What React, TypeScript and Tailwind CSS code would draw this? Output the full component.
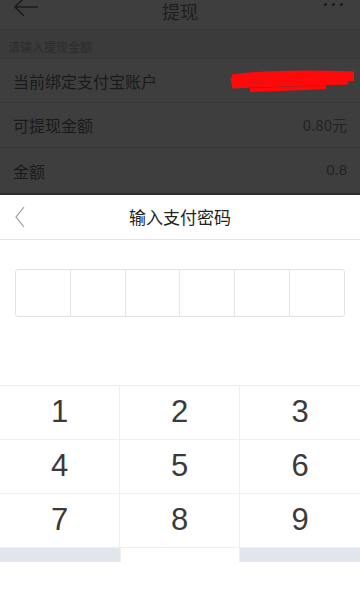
import React from "react";

const font = { fontFamily: '"Noto Sans CJK SC", "Noto Sans", sans-serif' };

export default function App() {
  const keys = ["1", "2", "3", "4", "5", "6", "7", "8", "9"];
  return (
    <div className="w-[360px] h-[602px] overflow-hidden bg-white flex flex-col" style={font}>
      {/* dimmed page */}
      <div className="h-[195px] bg-[#3e3e3e] flex flex-col shrink-0 border-b-2 border-[#2c2c2c]">
        <div className="h-[30px] flex items-center justify-between px-[13px] border-b border-[#353535] relative">
          <svg width="26" height="20" viewBox="0 0 26 20" className="-mt-[16px]">
            <path d="M25 10 H2 M11 1 L2 10 L11 19" fill="none" stroke="#1c1c1c" strokeWidth="1.6" />
          </svg>
          <div className="absolute left-0 right-0 top-[1px] text-center text-[18px] leading-[20px] text-[#1e1e1e]">提现</div>
          <div className="flex gap-[5px] -mt-[20px] mr-[4px]">
            <span className="w-[3px] h-[3px] rounded-full bg-[#1a1a1a]" />
            <span className="w-[3px] h-[3px] rounded-full bg-[#1a1a1a]" />
            <span className="w-[3px] h-[3px] rounded-full bg-[#1a1a1a]" />
          </div>
        </div>
        <div className="h-[29px] bg-[#3b3b3b] flex items-center px-[8px] pt-[6px] text-[12px] text-[#2c2c2c] border-b border-[#363636]">请输入提现金额</div>
        <div className="h-[44px] flex items-center justify-between pl-[13px] pr-[4px] border-b border-[#383838]">
          <span className="text-[16px] text-[#1a1a1a]">当前绑定支付宝账户</span>
          <svg width="126" height="26" viewBox="0 0 126 26">
            <path d="M2 9 C30 5 70 4 124 6" stroke="#ff0a0a" strokeWidth="5" fill="none" />
            <path d="M1 13 C40 10 80 10 124 10" stroke="#ff0a0a" strokeWidth="6" fill="none" />
            <path d="M2 18 C40 16 80 15 118 14" stroke="#ff0a0a" strokeWidth="5" fill="none" />
            <path d="M20 22 C50 21 80 20 96 19" stroke="#ff0a0a" strokeWidth="4" fill="none" />
          </svg>
        </div>
        <div className="h-[45px] flex items-center justify-between px-[13px] border-b border-[#383838]">
          <span className="text-[16px] text-[#1a1a1a]">可提现金额</span>
          <span className="text-[15px] text-[#232323]">0.80元</span>
        </div>
        <div className="flex-1 flex items-center justify-between px-[13px]">
          <span className="text-[16px] text-[#1a1a1a]">金额</span>
          <span className="text-[15px] text-[#232323]" style={{ fontFamily: '"Liberation Sans", sans-serif' }}>0.8</span>
        </div>
      </div>

      {/* password panel */}
      <div className="h-[45px] flex items-center relative border-b border-[#e6e6e6] shrink-0">
        <svg width="12" height="22" viewBox="0 0 12 22" className="ml-[14px]">
          <path d="M10 1 L2 11 L10 21" fill="none" stroke="#9a9a9a" strokeWidth="1.2" />
        </svg>
        <div className="absolute left-0 right-0 text-center text-[17px] text-[#222]">输入支付密码</div>
      </div>
      <div className="h-[145px] shrink-0 pt-[29px] px-[15px]">
        <div className="h-[48px] border border-[#e2e2e2] rounded-[3px] flex">
          {[0, 1, 2, 3, 4, 5].map((i) => (
            <div key={i} className={"flex-1 " + (i < 5 ? "border-r border-[#e6e6e6]" : "")} />
          ))}
        </div>
      </div>

      {/* keypad */}
      <div className="border-t border-[#ececec] grid grid-cols-3 shrink-0">
        {keys.map((k, i) => (
          <div
            key={k}
            className={
              "h-[54px] flex items-center justify-center border-b border-[#efefef] text-[31px] text-[#3a3a3a] " +
              (i % 3 !== 2 ? "border-r" : "")
            }
            style={{ fontFamily: '"Liberation Sans", Arial, sans-serif' }}
          >
            {k}
          </div>
        ))}
        <div className="h-[14px] bg-[#e1e5ec]" />
        <div className="h-[14px] bg-white border-x border-[#efefef]" />
        <div className="h-[14px] bg-[#e1e5ec]" />
      </div>
      <div className="flex-1 bg-white" />
    </div>
  );
}
